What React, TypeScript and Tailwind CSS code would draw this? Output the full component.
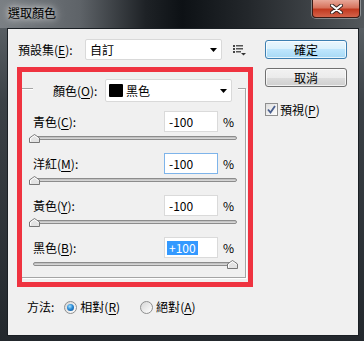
import React from 'react';

const rows = [
  { name: '青色', key: 'C', value: '-100', pos: 'min', hover: false, selected: false },
  { name: '洋紅', key: 'M', value: '-100', pos: 'min', hover: true, selected: false },
  { name: '黃色', key: 'Y', value: '-100', pos: 'min', hover: false, selected: false },
  { name: '黑色', key: 'B', value: '+100', pos: 'max', hover: false, selected: true },
];

function Key({ k }: { k: string }) {
  return (
    <>
      (<span className="underline underline-offset-[2px]">{k}</span>)
    </>
  );
}

function Arrow() {
  return (
    <svg width="7" height="4" viewBox="0 0 7 4">
      <path d="M0 0H7L3.5 4Z" fill="#000" />
    </svg>
  );
}

function CloseButton() {
  return (
    <div className="ml-auto w-[48px] h-[18px] rounded-b-[4px] border border-t-0 border-[#3b1a14] bg-[linear-gradient(180deg,#e8a899_0%,#d7735d_45%,#c23a20_55%,#d4634a_100%)] shadow-[0_0_0_1px_rgba(255,255,255,0.35)] flex items-center justify-center">
      <svg width="13" height="10" viewBox="0 0 13 10">
        <path d="M2 1.5L11 8.5M11 1.5L2 8.5" stroke="#3a2420" strokeWidth="4" strokeLinecap="round" />
        <path d="M2 1.5L11 8.5M11 1.5L2 8.5" stroke="#fff" strokeWidth="2.2" strokeLinecap="round" />
      </svg>
    </div>
  );
}

function Slider({ pos }: { pos: string }) {
  return (
    <div className="relative ml-[11px] mr-[8px] h-[10px]">
      <div className="absolute left-0 right-0 top-[3px] h-[4px] rounded-full border border-[#8c8c8c] bg-[linear-gradient(180deg,#b9b9b9,#dedede)]" />
      <svg
        className={pos === 'min' ? 'absolute left-[-4px] top-[1px]' : 'absolute right-[-1px] top-[1px]'}
        width="11"
        height="9"
        viewBox="0 0 11 9"
      >
        <path d="M0.5 8.5V4L5.5 0.5L10.5 4V8.5Z" fill="#e3e3e3" stroke="#777" />
        <path d="M1.5 7.5V4.5L5.5 1.7L9.5 4.5" fill="none" stroke="#fff" />
      </svg>
    </div>
  );
}

function Radio({ on }: { on?: boolean }) {
  return (
    <span className="w-[13px] h-[13px] rounded-full border border-[#8e8f8f] bg-[linear-gradient(135deg,#d6d6d6,#ffffff)] flex items-center justify-center">
      {on && (
        <span className="w-[7px] h-[7px] rounded-full bg-[radial-gradient(circle_at_40%_35%,#a8e4ff_0%,#2b8bd6_45%,#0c4a8a_100%)]" />
      )}
    </span>
  );
}

function Checkbox() {
  return (
    <span className="w-[13px] h-[13px] border border-[#8f8f8f] bg-[linear-gradient(135deg,#dedede,#ffffff)] flex items-center justify-center">
      <svg width="9" height="9" viewBox="0 0 9 9">
        <path d="M1 4.5L3.5 7.5L8 1" fill="none" stroke="#4a5f8e" strokeWidth="1.8" />
      </svg>
    </span>
  );
}

function MenuIcon() {
  return (
    <svg width="13" height="11" viewBox="0 0 13 11">
      <rect x="0" y="0" width="2" height="2" fill="#444" />
      <rect x="0" y="3" width="2" height="2" fill="#444" />
      <rect x="0" y="6" width="2" height="2" fill="#444" />
      <rect x="3" y="0" width="7" height="1.5" fill="#555" />
      <rect x="3" y="3" width="7" height="1.5" fill="#555" />
      <rect x="3" y="6" width="5" height="1.5" fill="#555" />
      <path d="M8 8H13L10.5 10.5Z" fill="#333" />
    </svg>
  );
}

export default function App() {
  return (
    <div className="w-[364px] h-[341px] flex flex-col overflow-hidden bg-[linear-gradient(180deg,#63696e_0%,#3b4146_30%,#23282d_100%)] font-['Noto_Sans_CJK_TC','Noto_Sans',sans-serif] text-[12px] text-black leading-none">
      <div className="h-[28px] flex items-start pl-[8px] pr-[4px] bg-[linear-gradient(90deg,#7a7f84_0%,#5e6368_22%,#1e2226_40%,#0d1115_50%,#23272b_68%,#53585c_100%)]">
        <span className="mt-[7px] text-[12px] [text-shadow:0_0_6px_rgba(255,255,255,0.9),0_0_12px_rgba(255,255,255,0.6)]">
          選取顏色
        </span>
        <CloseButton />
      </div>

      <div className="flex-1 ml-[7px] mr-[5px] mb-[5px] border border-[#1a1f24] bg-[#f0f0f0] flex pt-[10px] pl-[9px]">
        {/* left column */}
        <div className="w-[236px] flex flex-col">
          <div className="h-[21px] flex items-center">
            <span className="w-[68px] pl-[1px]">
              預設集<Key k="E" />:
            </span>
            <div className="w-[137px] h-[21px] bg-white border border-[#d9d9d9] rounded-[2px] flex items-center pl-[4px] pr-[4px]">
              <span className="flex-1">自訂</span>
              <Arrow />
            </div>
            <span className="ml-[11px] mt-[2px]">
              <MenuIcon />
            </span>
          </div>

          <div className="mt-[7px] h-[220px] border-[5px] border-[#ef3340] flex flex-col">
            <div className="mt-[16px] mr-[2px] mb-[4px] flex-1 border border-l-0 border-[#a5a5a5] shadow-[1px_1px_0_#fff,inset_0_1px_0_#fff] flex flex-col">
              <div className="mt-[-10px] ml-[11px] w-[205px] h-[23px] bg-[#f0f0f0] flex items-center pl-[20px] pr-[6px]">
                <span>
                  顏色<Key k="O" />:
                </span>
                <div className="ml-auto w-[127px] h-[23px] bg-white border border-[#d9d9d9] rounded-[2px] flex items-center pl-[3px] pr-[4px]">
                  <span className="w-[14px] h-[13px] bg-black rounded-[1px]" />
                  <span className="ml-[3px] flex-1">黑色</span>
                  <Arrow />
                </div>
              </div>

              <div className="mt-[9px] flex flex-col gap-[10px]">
                {rows.map((r) => (
                  <div key={r.key}>
                    <div className="h-[21px] flex items-center pl-[11px] pr-[12px]">
                      <span className="flex-1">
                        {r.name}
                        <Key k={r.key} />:
                      </span>
                      <div
                        className={
                          r.hover
                            ? 'w-[54px] h-[21px] bg-white border border-[#7eb4ea] flex items-center pl-[2px]'
                            : 'w-[54px] h-[21px] bg-white border border-[#dadada] flex items-center pl-[2px]'
                        }
                      >
                        <span
                          className={
                            r.selected
                              ? 'h-[14px] px-[2px] flex items-center bg-[#3399ff] text-white'
                              : 'h-[14px] px-[2px] flex items-center'
                          }
                        >
                          {r.value}
                        </span>
                      </div>
                      <span className="ml-[5px] w-[10px]">%</span>
                    </div>
                    <div className="mt-[1px]">
                      <Slider pos={r.pos} />
                    </div>
                  </div>
                ))}
              </div>
            </div>
          </div>

          <div className="mt-[13px] h-[14px] flex items-center pl-[10px]">
            <span>方法:</span>
            <span className="ml-[10px]">
              <Radio on />
            </span>
            <span className="ml-[3px]">
              相對<Key k="R" />
            </span>
            <span className="ml-[20px]">
              <Radio />
            </span>
            <span className="ml-[3px]">
              絕對<Key k="A" />
            </span>
          </div>
        </div>

        {/* right column */}
        <div className="ml-[12px] w-[82px] flex flex-col">
          <div className="mt-[1px] h-[19px] rounded-[3px] border border-[#3c7fb1] bg-[linear-gradient(180deg,#eaf6fd_0%,#d9f0fc_50%,#bee6fd_50%,#a7d9f5_100%)] shadow-[inset_0_0_0_1px_rgba(255,255,255,0.7)] flex items-center justify-center">
            確定
          </div>
          <div className="mt-[9px] h-[19px] rounded-[3px] border border-[#707070] bg-[linear-gradient(180deg,#f2f2f2_0%,#ebebeb_50%,#dddddd_50%,#cfcfcf_100%)] shadow-[inset_0_0_0_1px_rgba(255,255,255,0.7)] flex items-center justify-center">
            取消
          </div>
          <div className="mt-[16px] flex items-center">
            <Checkbox />
            <span className="ml-[2px]">
              預視<Key k="P" />
            </span>
          </div>
        </div>
      </div>
    </div>
  );
}
